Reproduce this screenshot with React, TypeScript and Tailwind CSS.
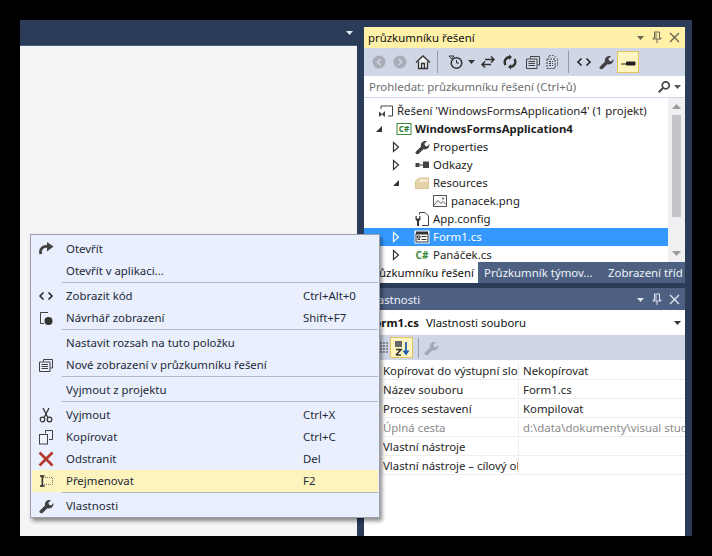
import React from "react";

const font = { fontFamily: '"Noto Sans", "Open Sans", sans-serif' };

function I({ children, s = 16, className = "" }: { children: React.ReactNode; s?: number; className?: string }) {
  return (
    <svg width={s} height={s} viewBox="0 0 16 16" fill="none" className={`shrink-0 ${className}`}>
      {children}
    </svg>
  );
}

const Wrench = ({ c = "#424242" }: { c?: string }) => (
  <I>
    <path d="M1.5 13 L7 7.5 C6.3 4 9 1.2 13 2.2 L10.3 4.8 L11.2 6.8 L13.2 7.4 L15.5 5 C15.8 9 12.6 11.2 9.4 10.2 L4.5 15 C3 15.8 1 14.6 1.5 13Z" fill={c} />
  </I>
);
const Code = () => (
  <I>
    <path d="M5.5 4.5 L2 8 L5.5 11.5 M10.5 4.5 L14 8 L10.5 11.5" stroke="#222" strokeWidth="1.5" />
  </I>
);
const Pages = () => (
  <I>
    <path d="M5.5 4.5 V2.5 H14.5 V11 H12.5 M3.5 5 H12 V14.5 H1.5 V5 Z" stroke="#424242" />
    <path d="M3.5 7.5 H10 M3.5 9.5 H10 M3.5 11.5 H10" stroke="#424242" />
  </I>
);

const Tri = ({ white }: { white?: boolean }) => (
  <svg width="8" height="12" viewBox="0 0 8 12" className="shrink-0">
    <path d="M1.5 1.5 L6.5 6 L1.5 10.5 Z" fill="none" stroke={white ? "#fff" : "#333"} strokeWidth="1.2" />
  </svg>
);
const TriOpen = () => (
  <svg width="8" height="8" viewBox="0 0 8 8" className="shrink-0">
    <path d="M7 1 V7 H1 Z" fill="#333" />
  </svg>
);
const Caret = ({ c = "#333" }: { c?: string }) => (
  <svg width="7" height="4" viewBox="0 0 7 4" className="shrink-0">
    <path d="M0 0 H7 L3.5 4 Z" fill={c} />
  </svg>
);
const CSharpBox = () => (
  <I>
    <rect x="1" y="2.5" width="14" height="11" fill="#fff" stroke="#3c8a3c" />
    <text x="8" y="11" textAnchor="middle" fontSize="8" fontWeight="700" fill="#2f7d2f" style={font}>C#</text>
  </I>
);

const PanelControls = ({ c }: { c: string }) => (
  <div className="flex items-center">
    <Caret c={c} />
    <svg width="10" height="13" viewBox="0 0 10 13" className="ml-[8px]">
      <path d="M2.5 1 H7.5 V7 H9 V8 H1 V7 H2.5 Z M4 2 V7 M5 8 V12" stroke={c} fill="none" />
    </svg>
    <svg width="11" height="11" viewBox="0 0 11 11" className="ml-[7px]">
      <path d="M1 1 L10 10 M10 1 L1 10" stroke={c} strokeWidth="1.4" />
    </svg>
  </div>
);

type Tree = { label: string; indent: string; arrow?: "c" | "o"; icon: React.ReactNode; bold?: boolean; sel?: boolean };

const tree: Tree[] = [
  {
    label: "Řešení 'WindowsFormsApplication4' (1 projekt)",
    indent: "w-[12px]",
    icon: (
      <I>
        <path d="M3 6 V3 H14.5 V13 H10" stroke="#424242" />
        <path d="M1 8.5 L4 11 L7 8 V14 L4 11.5 L1 14 Z" fill="#424242" />
      </I>
    ),
  },
  { label: "WindowsFormsApplication4", indent: "w-[30px] pl-[11px]", arrow: "o", bold: true, icon: <CSharpBox /> },
  { label: "Properties", indent: "w-[48px] pl-[28px]", arrow: "c", icon: <Wrench /> },
  {
    label: "Odkazy",
    indent: "w-[48px] pl-[28px]",
    arrow: "c",
    icon: (
      <I>
        <rect x="1.5" y="6" width="4" height="4" fill="#424242" />
        <rect x="9" y="4.5" width="6" height="6.5" fill="#424242" />
        <path d="M5.5 8 H9" stroke="#424242" />
      </I>
    ),
  },
  {
    label: "Resources",
    indent: "w-[48px] pl-[28px]",
    arrow: "o",
    icon: (
      <I>
        <path d="M1.5 6 L5.5 3 H14.5 V13.5 H1.5 Z" fill="#e6d3ac" stroke="#d8c193" />
        <path d="M5 6.5 H14 V4.5 H6.5 Z" fill="#f8f2e4" />
      </I>
    ),
  },
  {
    label: "panacek.png",
    indent: "w-[66px]",
    icon: (
      <I>
        <rect x="1.5" y="2.5" width="13" height="11" fill="#fff" stroke="#555" />
        <path d="M2 12 L6 7.5 L9 10.5 L11 8.5 L14 11.5" stroke="#555" />
        <circle cx="11" cy="5.5" r="1" fill="#555" />
      </I>
    ),
  },
  {
    label: "App.config",
    indent: "w-[48px] pl-[28px]",
    icon: (
      <I>
        <path d="M5.5 3.5 V1.5 H11 L14.5 5 V14.5 H8" stroke="#424242" />
        <path d="M1.5 5 V8 C1.5 9.3 3 10 3 10 V15 H5 V10 C5 10 6.5 9.3 6.5 8 V5 L5.3 5 V7.5 H2.7 V5 Z" fill="#333" />
      </I>
    ),
  },
  {
    label: "Form1.cs",
    indent: "w-[48px] pl-[28px]",
    arrow: "c",
    sel: true,
    icon: (
      <I>
        <rect x="1" y="2" width="14" height="12" fill="#fff" stroke="#fff" />
        <rect x="2" y="5" width="12" height="8" fill="#fff" stroke="#333" />
        <rect x="2" y="2.5" width="12" height="2.5" fill="#333" />
        <path d="M3.5 7 H6 V9 H3.5 Z M7.5 7.5 H12.5 M7.5 10.5 H12.5 M3.5 10.5 H6" stroke="#333" />
      </I>
    ),
  },
  {
    label: "Panáček.cs",
    indent: "w-[48px] pl-[28px]",
    arrow: "c",
    icon: (
      <div className="w-[16px] text-center text-[10px] font-bold leading-none text-[#3c8a3c]">C#</div>
    ),
  },
];

function TreeRow({ t }: { t: Tree }) {
  return (
    <div className={`flex h-[18px] shrink-0 items-center ${t.sel ? "bg-[#3399ff] text-white" : "text-[#1e1e1e]"}`}>
      <div className={`flex shrink-0 items-center ${t.indent}`}>
        {t.arrow === "c" && <Tri white={t.sel} />}
        {t.arrow === "o" && <TriOpen />}
      </div>
      <div className="flex w-[20px] shrink-0 justify-center">{t.icon}</div>
      <span className={`ml-[1px] whitespace-nowrap ${t.bold ? "font-bold" : ""}`}>{t.label}</span>
    </div>
  );
}

const Toolbar = () => (
  <div className="flex h-[28px] shrink-0 items-center bg-[#cfd6e5] pl-[5px]">
    <div className="flex w-[20px] justify-center">
      <I><circle cx="8" cy="8" r="6.5" fill="#a9adb8" /><path d="M9.5 5 L6.5 8 L9.5 11" stroke="#cfd6e5" strokeWidth="1.5" /></I>
    </div>
    <div className="ml-[1px] flex w-[20px] justify-center">
      <I><circle cx="8" cy="8" r="6.5" fill="#a9adb8" /><path d="M6.5 5 L9.5 8 L6.5 11" stroke="#cfd6e5" strokeWidth="1.5" /></I>
    </div>
    <div className="ml-[2px] flex w-[22px] justify-center">
      <I><path d="M1 8.5 L8 2 L15 8.5 M3.5 7.5 V14.5 H12.5 V7.5 M6.5 14 V9.5 H9.5 V14" stroke="#333" strokeWidth="1.3" fill="#f6f6f6" /></I>
    </div>
    <div className="ml-[3px] h-[22px] w-px bg-[#8e9bb5]" />
    <div className="ml-[8px] flex w-[20px] justify-center">
      <I>
        <circle cx="8.5" cy="9" r="5.3" stroke="#333" strokeWidth="1.5" />
        <path d="M8.5 6 V9 H11 M1 2 H6 L3.5 5 Z" stroke="#333" />
      </I>
    </div>
    <div className="ml-[1px] flex w-[8px] justify-center"><Caret /></div>
    <div className="ml-[3px] flex w-[20px] justify-center">
      <I>
        <path d="M2 10.5 H11 M5 7.5 L2 10.5 L5 13.5 M14 5.5 H5 M11 2.5 L14 5.5 L11 8.5" stroke="#333" strokeWidth="1.6" />
      </I>
    </div>
    <div className="ml-[2px] flex w-[20px] justify-center">
      <I>
        <path d="M3.5 11 C1.5 7.5 3.5 3.5 7.5 3 M12.5 5 C14.5 8.5 12.5 12.5 8.5 13" stroke="#333" strokeWidth="2.4" />
        <path d="M7 0.5 V6 L10 3 Z M9 15.5 V10 L6 13 Z" fill="#333" />
      </I>
    </div>
    <div className="ml-[3px] flex w-[20px] justify-center"><Pages /></div>
    <div className="ml-[-1px] flex w-[20px] justify-center">
      <I>
        <path d="M5 3.5 V1.5 H10 L13.5 5 V11.5 H11.5" stroke="#555" strokeDasharray="1.5 1" />
        <path d="M3 5 H11 V14.5 H3 Z M5 7.5 H9 M5 9.5 H9 M5 11.5 H9" stroke="#444" strokeDasharray="2 1" />
      </I>
    </div>
    <div className="ml-[6px] h-[22px] w-px bg-[#8e9bb5]" />
    <div className="ml-[5px] flex w-[20px] justify-center"><Code /></div>
    <div className="ml-[2px] flex w-[20px] justify-center"><Wrench /></div>
    <div className="ml-[1px] flex h-[22px] w-[22px] items-center justify-center border border-[#e5c365] bg-[#fdf4bf]">
      <I>
        <path d="M1 10 H6 M6.5 10 V8 H15 V11 H6.5 Z" stroke="#222" strokeWidth="1" fill="#222" />
      </I>
    </div>
  </div>
);

const props: [string, string, boolean?][] = [
  ["Kopírovat do výstupní složky", "Nekopírovat"],
  ["Název souboru", "Form1.cs"],
  ["Proces sestavení", "Kompilovat"],
  ["Úplná cesta", "d:\\data\\dokumenty\\visual studio 2013\\Projects", true],
  ["Vlastní nástroje", ""],
  ["Vlastní nástroje – cílový obor názvů", ""],
];

type MI = { t?: string; k?: string; icon?: React.ReactNode; hi?: boolean; sep?: boolean };
const menu: MI[] = [
  {
    t: "Otevřít",
    icon: (
      <I>
        <path d="M3 13 C1 8 5.5 4.5 10 5.5" stroke="#424242" strokeWidth="2.8" />
        <path d="M9 1 L15.5 5.5 L9 10.5 Z" fill="#424242" />
      </I>
    ),
  },
  { t: "Otevřít v aplikaci..." },
  { sep: true },
  { t: "Zobrazit kód", k: "Ctrl+Alt+0", icon: <Code /> },
  {
    t: "Návrhář zobrazení",
    k: "Shift+F7",
    icon: (
      <I>
        <path d="M8 2.5 H2.5 V13.5 H6" stroke="#424242" />
        <path d="M2.5 2.5 H10" stroke="#424242" />
        <circle cx="10.5" cy="11" r="4" fill="#333" />
      </I>
    ),
  },
  { sep: true },
  { t: "Nastavit rozsah na tuto položku" },
  { t: "Nové zobrazení v průzkumníku řešení", icon: <Pages /> },
  { sep: true },
  { t: "Vyjmout z projektu" },
  { sep: true },
  {
    t: "Vyjmout",
    k: "Ctrl+X",
    icon: (
      <I>
        <path d="M5 1 L9.8 10.5 M11 1 L6.2 10.5" stroke="#333" strokeWidth="1.3" />
        <circle cx="4.5" cy="12.5" r="2.3" stroke="#333" strokeWidth="1.2" />
        <circle cx="11.5" cy="12.5" r="2.3" stroke="#333" strokeWidth="1.2" />
      </I>
    ),
  },
  {
    t: "Kopírovat",
    k: "Ctrl+C",
    icon: (
      <I>
        <path d="M7.5 4.5 V1.5 H14.5 V10.5 H11" stroke="#424242" />
        <rect x="1.5" y="5.5" width="8" height="9.5" stroke="#424242" fill="#eef2fc" />
      </I>
    ),
  },
  {
    t: "Odstranit",
    k: "Del",
    icon: (
      <I>
        <path d="M1.5 1.5 L14.5 14.5 M14.5 1.5 L1.5 14.5" stroke="#b5362a" strokeWidth="2.6" />
      </I>
    ),
  },
  {
    t: "Přejmenovat",
    k: "F2",
    hi: true,
    icon: (
      <I>
        <rect x="5" y="4.5" width="9.5" height="7" stroke="#777" strokeDasharray="1 1" />
        <path d="M2 3 H6.5 M2 13 H6.5 M4.2 3 V13" stroke="#222" strokeWidth="1.3" />
      </I>
    ),
  },
  { sep: true },
  { t: "Vlastnosti", icon: <Wrench /> },
];

export default function App() {
  return (
    <div className="h-[556px] w-[712px] overflow-hidden bg-black p-[20px] text-[11.4px]" style={font}>
      <div className="relative flex h-[516px] w-[672px] bg-[#2b3c59]">
        {/* Document well */}
        <div className="flex w-[337px] shrink-0 flex-col">
          <div className="flex h-[26px] shrink-0 items-center justify-end border-b border-[#4d6082] pr-[4px]">
            <Caret c="#e4e8f2" />
          </div>
          <div className="flex-1 bg-[#f5f5f5]" />
        </div>

        {/* Right dock */}
        <div className="ml-[7px] flex w-[321px] shrink-0 flex-col pt-[7px]">
          {/* Solution explorer */}
          <div className="flex h-[21px] shrink-0 items-center justify-between bg-[#fff1a8] pl-[4px] pr-[5px] text-[#111]">
            <span>průzkumníku řešení</span>
            <PanelControls c="#6b6650" />
          </div>
          <Toolbar />
          <div className="flex h-[22px] shrink-0 items-center justify-between border-b border-[#cfd6e5] bg-white pl-[5px] pr-[4px] text-[#6d6d6d]">
            <span>Prohledat: průzkumníku řešení (Ctrl+ů)</span>
            <div className="flex items-center gap-[3px]">
              <I s={14}>
                <circle cx="10" cy="6" r="4" stroke="#444" strokeWidth="2" />
                <path d="M7 9 L2 14" stroke="#444" strokeWidth="2.4" />
              </I>
              <Caret c="#555" />
            </div>
          </div>
          <div className="flex h-[164px] shrink-0 overflow-hidden bg-white">
            <div className="min-w-0 flex-1 pt-[4px]">
              <div className="flex flex-col">
                {tree.map((t) => (
                  <TreeRow key={t.label} t={t} />
                ))}
              </div>
            </div>
            <div className="flex w-[17px] shrink-0 flex-col items-center bg-[#f0f0f3]">
              <div className="flex h-[17px] shrink-0 items-center justify-center">
                <svg width="9" height="5" viewBox="0 0 9 5"><path d="M0 5 L4.5 0 L9 5 Z" fill="#9a9a9a" /></svg>
              </div>
              <div className="h-[102px] w-[9px] shrink-0 bg-[#c4c5cb]" />
              <div className="flex-1" />
              <div className="flex h-[17px] shrink-0 items-center justify-center">
                <svg width="9" height="5" viewBox="0 0 9 5"><path d="M0 0 L4.5 5 L9 0 Z" fill="#9a9a9a" /></svg>
              </div>
            </div>
          </div>
          <div className="flex h-[21px] shrink-0 items-center overflow-hidden bg-[#4d6082] text-[#f0f3fa]">
            <div className="flex h-full w-[114px] shrink-0 items-center justify-end overflow-hidden whitespace-nowrap bg-white pr-[4px] text-[#111]">
              Průzkumníku řešení
            </div>
            <span className="ml-[6px] w-[124px] shrink-0 whitespace-nowrap">Průzkumník týmov...</span>
            <span className="whitespace-nowrap">Zobrazení tříd</span>
          </div>

          {/* Properties */}
          <div className="mt-[5px] flex h-[22px] shrink-0 items-center justify-between bg-[#4d6082] pl-[4px] pr-[5px] pt-px text-[#f0f3fa]">
            <span>Vlastnosti</span>
            <PanelControls c="#dfe4ef" />
          </div>
          <div className="flex h-[25px] shrink-0 items-center justify-between bg-white pl-[4px] pr-[4px] text-[#111]">
            <span className="whitespace-nowrap">
              <b>Form1.cs</b>
              <span className="ml-[7px]">Vlastnosti souboru</span>
            </span>
            <Caret c="#333" />
          </div>
          <div className="flex h-[25px] shrink-0 items-center bg-[#cfd6e5] pl-[16px]">
            <svg width="8" height="14" viewBox="0 0 8 14" className="shrink-0">
              <path d="M1 1 V13 M4 1 V13 M7 1 V13" stroke="#444" strokeDasharray="2 1" />
            </svg>
            <div className="ml-[2px] flex h-[21px] w-[23px] items-center justify-center border border-[#e5c365] bg-[#fdf4bf]">
              <I>
                <rect x="1" y="1" width="7" height="6" fill="#666" />
                <path d="M2 15 L7 9.5 H2 M2 15 H7" stroke="#333" strokeWidth="1.6" />
                <path d="M12 2 V13 M9.5 10.5 L12 14 L14.5 10.5" stroke="#1f5fb0" strokeWidth="1.8" />
              </I>
            </div>
            <div className="ml-[5px] h-[20px] w-px bg-[#8e9bb5]" />
            <div className="ml-[4px] flex w-[16px] justify-center">
              <Wrench c="#a2a8b5" />
            </div>
          </div>
          <div className="flex min-h-0 flex-1 flex-col bg-white pt-[1px]">
            {props.map(([n, v, gray]) => (
              <div
                key={n}
                className={`flex h-[19px] shrink-0 items-center border-b border-[#eeeef2] pt-px ${gray ? "text-[#8a8a8a]" : "text-[#1e1e1e]"}`}
              >
                <div className="h-full w-[19px] shrink-0 bg-[#f5f5f5]" />
                <div className="flex h-full w-[136px] shrink-0 items-center overflow-hidden whitespace-nowrap border-r border-[#eeeef2]">
                  {n}
                </div>
                <div className="min-w-0 flex-1 overflow-hidden whitespace-nowrap pl-[4px]">{v}</div>
              </div>
            ))}
          </div>
        </div>

        {/* Context menu */}
        <div className="absolute left-[10px] top-[214px] flex h-[284px] w-[350px] flex-col border border-[#9a9fa8] bg-[#e9effc] pb-px pt-[3px] text-[#1e2a3a] shadow-[2px_3px_4px_rgba(0,0,0,0.45)]">
          {menu.map((m, i) =>
            m.sep ? (
              <div key={i} className="flex h-[3px] shrink-0 items-start pl-[31px] pr-[1px]">
                <div className="h-px flex-1 bg-[#b0b8cc]" />
              </div>
            ) : (
              <div
                key={i}
                className={`mx-px flex h-[22px] shrink-0 items-center ${m.hi ? "bg-[#fdf3bd]" : ""}`}
              >
                <div className="flex w-[34px] shrink-0 justify-center pr-[7px]">{m.icon}</div>
                <span className="whitespace-nowrap">{m.t}</span>
                {m.k && <span className="ml-auto w-[75px] shrink-0 whitespace-nowrap">{m.k}</span>}
              </div>
            ),
          )}
        </div>
      </div>
    </div>
  );
}
